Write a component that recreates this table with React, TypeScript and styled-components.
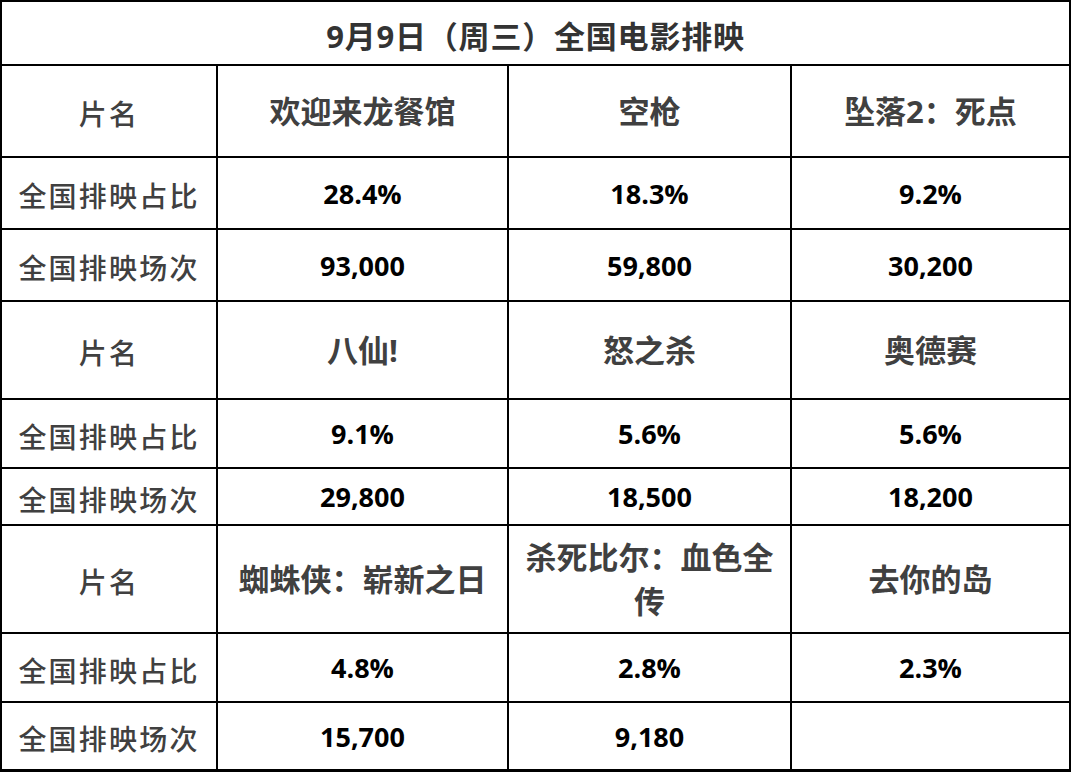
import React from "react";
import styled, { createGlobalStyle } from "styled-components";

const Global = createGlobalStyle`
  html, body { margin: 0; padding: 0; background: #fff; }
  body { font-family: "Open Sans", "Noto Sans CJK SC", sans-serif; }
`;

const Grid = styled.div`
  width: 1071px;
  height: 772px;
  box-sizing: border-box;
  background: #000;
  padding: 2px 2px 3px 2px;
  display: grid;
  grid-template-columns: 214px 289px 281px 277px;
  grid-template-rows: 62px 90px 70px 70px 96px 67px 55px 106px 67px 66px;
  gap: 2px;
`;

const Cell = styled.div<{ $span?: number }>`
  background: #fff;
  display: flex;
  align-items: center;
  justify-content: center;
  text-align: center;
  box-sizing: border-box;
  padding: 0 8px;
  grid-column: ${(p) => (p.$span ? `span ${p.$span}` : "auto")};
`;

const Title = styled.span`
  font-family: "Open Sans", "Noto Sans CJK SC", sans-serif;
  font-weight: 700;
  font-size: 31px;
  color: #333;
  letter-spacing: 0.8px;
  padding-top: 2px;
`;

const Label = styled.span`
  font-family: "Open Sans", "Noto Sans CJK SC", sans-serif;
  font-weight: 500;
  font-size: 28px;
  color: #404040;
  letter-spacing: 2.2px;
  padding-top: 4px;
`;

const Name = styled.span`
  font-family: "Open Sans", "Noto Sans CJK SC", sans-serif;
  font-weight: 700;
  font-size: 31px;
  line-height: 44px;
  color: #404040;
`;

const Num = styled.span`
  font-family: "Open Sans", "Noto Sans CJK SC", sans-serif;
  font-weight: 700;
  font-size: 27px;
  color: #000;
`;

type Group = { names: string[]; share: string[]; shows: string[] };

const groups: Group[] = [
  {
    names: ["欢迎来龙餐馆", "空枪", "坠落2：死点"],
    share: ["28.4%", "18.3%", "9.2%"],
    shows: ["93,000", "59,800", "30,200"],
  },
  {
    names: ["八仙!", "怒之杀", "奥德赛"],
    share: ["9.1%", "5.6%", "5.6%"],
    shows: ["29,800", "18,500", "18,200"],
  },
  {
    names: ["蜘蛛侠：崭新之日", "杀死比尔：血色全传", "去你的岛"],
    share: ["4.8%", "2.8%", "2.3%"],
    shows: ["15,700", "9,180", ""],
  },
];

export default function App() {
  return (
    <>
      <Global />
      <Grid>
        <Cell $span={4}>
          <Title>9月9日（周三）全国电影排映</Title>
        </Cell>
        {groups.map((g, gi) => (
          <React.Fragment key={gi}>
            <Cell>
              <Label>片名</Label>
            </Cell>
            {g.names.map((n, i) => (
              <Cell key={"n" + i}>
                <Name>{n}</Name>
              </Cell>
            ))}
            <Cell>
              <Label>全国排映占比</Label>
            </Cell>
            {g.share.map((n, i) => (
              <Cell key={"s" + i}>
                <Num>{n}</Num>
              </Cell>
            ))}
            <Cell>
              <Label>全国排映场次</Label>
            </Cell>
            {g.shows.map((n, i) => (
              <Cell key={"c" + i}>
                <Num>{n}</Num>
              </Cell>
            ))}
          </React.Fragment>
        ))}
      </Grid>
    </>
  );
}
